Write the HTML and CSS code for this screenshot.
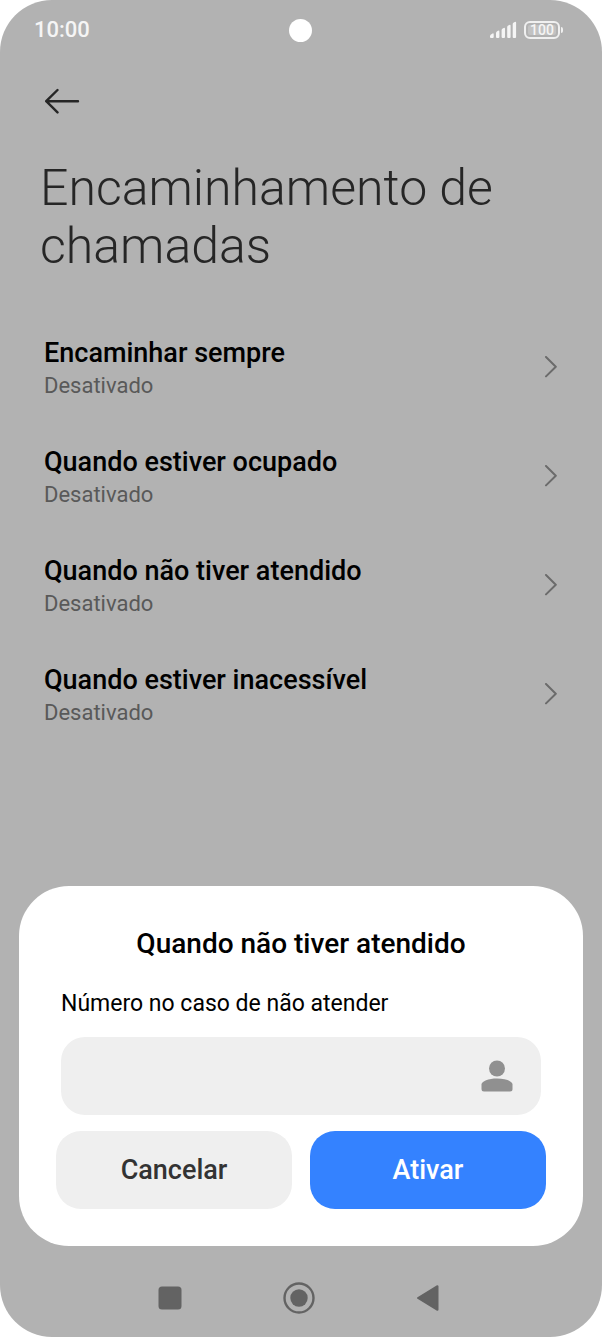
FILE: index.html
```html
<!DOCTYPE html>
<html lang="pt">
<head>
<meta charset="utf-8">
<meta name="viewport" content="width=device-width, initial-scale=1">
<title>Encaminhamento de chamadas</title>
<link rel="stylesheet" href="styles.css">
</head>
<body>
<div class="phone">
  <header class="status">
    <span class="clock">10:00</span>
    <span class="camera"></span>
    <span class="indicators">
      <svg class="signal" width="28" height="18" viewBox="0 0 28 18" fill="#f5f5f5">
        <path d="M1 15q0-1.500 2.500-2.500 1.200-.5 1.200.8V16q0 1-1 1H2q-1 0-1-1z"/>
        <path d="M7 12q0-1 1.500-2 1.900-1 1.900.5V16q0 1-1 1H8q-1 0-1-1z"/>
        <path d="M12.600 9q0-1 1.500-1.800 1.900-1 1.900.5V16q0 1-1 1h-1.400q-1 0-1-1z"/>
        <path d="M18.200 6q0-1 1.500-1.800 1.900-1 1.900.5V16q0 1-1 1h-1.400q-1 0-1-1z"/>
        <path d="M23.700 3q0-1 1.500-1.800 1.900-1 1.900.5V16q0 1-1 1h-1.400q-1 0-1-1z"/>
      </svg>
      <span class="battery"><span class="charge">100</span></span>
    </span>
  </header>

  <main class="page">
    <button class="back" type="button" aria-label="Voltar">
      <svg width="36" height="26" viewBox="0 0 36 26" fill="none" stroke="#262626" stroke-width="2.4" stroke-linecap="round" stroke-linejoin="round">
        <path d="M13.500 2 2.200 13.200 13.500 24.400M2.200 13.200H34"/>
      </svg>
    </button>
    <h1 class="title">Encaminhamento de chamadas</h1>
    <ul class="options">
      <li><a class="option" href="#"><span class="text"><span class="name">Encaminhar sempre</span><span class="state">Desativado</span></span>
        <svg class="chevron" viewBox="0 0 14 24"><path d="M2 1 11.800 10.700 2 20.400"/></svg></a></li>
      <li><a class="option" href="#"><span class="text"><span class="name">Quando estiver ocupado</span><span class="state">Desativado</span></span>
        <svg class="chevron" viewBox="0 0 14 24"><path d="M2 1 11.800 10.700 2 20.400"/></svg></a></li>
      <li><a class="option" href="#"><span class="text"><span class="name">Quando não tiver atendido</span><span class="state">Desativado</span></span>
        <svg class="chevron" viewBox="0 0 14 24"><path d="M2 1 11.800 10.700 2 20.400"/></svg></a></li>
      <li><a class="option" href="#"><span class="text"><span class="name">Quando estiver inacessível</span><span class="state">Desativado</span></span>
        <svg class="chevron" viewBox="0 0 14 24"><path d="M2 1 11.800 10.700 2 20.400"/></svg></a></li>
    </ul>
  </main>

  <form class="dialog" role="dialog" aria-labelledby="dialog-title">
    <h2 class="dialog-title" id="dialog-title">Quando não tiver atendido</h2>
    <label class="label" for="number">Número no caso de não atender</label>
    <div class="field">
      <input class="number" id="number" type="tel">
      <button class="contact" type="button" aria-label="Contactos">
        <svg width="32" height="32" viewBox="0 0 32 32" fill="#909090">
          <circle cx="16" cy="8.500" r="8"/>
          <path d="M.5 24.500c0-3.300 7-6 15.500-6s15.500 2.700 15.500 6V29q0 2.500-2.500 2.500H3Q.5 31.500.5 29z"/>
        </svg>
      </button>
    </div>
    <div class="actions">
      <button class="action" type="button">Cancelar</button>
      <button class="action primary" type="submit">Ativar</button>
    </div>
  </form>

  <nav class="nav">
    <button type="button" aria-label="Recentes">
      <svg width="32" height="32" viewBox="0 0 32 32" fill="#636363"><rect x="4.500" y="4.500" width="23" height="23" rx="3.500"/></svg>
    </button>
    <button type="button" aria-label="Início">
      <svg width="32" height="32" viewBox="0 0 32 32" fill="#636363"><circle cx="16" cy="16" r="14.500" fill="none" stroke="#636363" stroke-width="2.400"/><circle cx="16" cy="16" r="8.700"/></svg>
    </button>
    <button type="button" aria-label="Voltar">
      <svg width="32" height="32" viewBox="0 0 32 32" fill="#636363" stroke="#636363" stroke-width="2" stroke-linejoin="round"><path d="M25.500 4.200v23.600L6 16z"/></svg>
    </button>
  </nav>
</div>
</body>
</html>
```
FILE: styles.css
```css
* { box-sizing: border-box; }

body {
  margin: 0;
  background: #fff;
  font-family: Roboto, "Liberation Sans", sans-serif;
}

button {
  font: inherit;
  border: 0;
  padding: 0;
  background: none;
  cursor: pointer;
}

svg { display: block; }

.phone {
  display: flex;
  flex-direction: column;
  min-height: 100vh;
  border-radius: 52px;
  background: #b2b2b2;
}

.status {
  display: grid;
  grid-template-columns: 1fr auto 1fr;
  align-items: center;
  height: 60px;
  padding: 0 36px 0 34px;
  color: #f5f5f5;
}

.clock {
  font-size: 22px;
  font-weight: 500;
  line-height: 26px;
}

.camera {
  width: 23px;
  height: 23px;
  border-radius: 50%;
  background: #fff;
}

.indicators {
  display: flex;
  justify-content: flex-end;
  align-items: center;
  gap: 7px;
}

.battery {
  position: relative;
  width: 36px;
  height: 18px;
  margin-right: 6px;
  padding: 2px;
  border: 2px solid #f0f0f0;
  border-radius: 6px;
}

.battery::after {
  content: "";
  position: absolute;
  top: 4px;
  right: -5px;
  width: 2px;
  height: 6px;
  border-radius: 0 2px 2px 0;
  background: #f0f0f0;
}

.charge {
  display: block;
  border-radius: 2px;
  background: #c2c2c2;
  font-size: 14px;
  font-weight: 500;
  line-height: 10px;
  text-align: center;
}

.page { padding: 28px 44px 40px; }

.title {
  margin: 41px -4px 0;
  color: #262626;
  font-size: 50px;
  font-weight: 300;
  line-height: 58px;
}

.options {
  display: grid;
  gap: 47px;
  margin: 62px 0 0;
  padding: 0;
  list-style: none;
}

.option {
  display: flex;
  justify-content: space-between;
  align-items: center;
  color: #000;
  text-decoration: none;
}

.text {
  display: grid;
  gap: 4px;
}

.name {
  font-size: 27px;
  font-weight: 500;
  line-height: 32px;
}

.state {
  color: #595959;
  font-size: 22px;
  line-height: 26px;
}

.chevron {
  width: 14px;
  height: 24px;
  fill: none;
  stroke: #6b6b6b;
  stroke-width: 2;
  stroke-linecap: round;
  stroke-linejoin: round;
}

.dialog {
  margin: auto 19px 0;
  padding: 41px 37px 37px;
  border-radius: 50px;
  background: #fff;
}

.dialog-title {
  margin: 0;
  font-size: 28px;
  font-weight: 500;
  line-height: 34px;
  text-align: center;
}

.label {
  display: block;
  margin: 29px 5px 19px;
  font-size: 23px;
  line-height: 28px;
}

.field {
  display: flex;
  align-items: center;
  height: 78px;
  margin: 0 5px;
  padding: 0 28px 0 24px;
  border-radius: 24px;
  background: #efefef;
}

.number {
  flex: 1;
  min-width: 0;
  height: 100%;
  border: 0;
  outline: 0;
  background: none;
  font: inherit;
  font-size: 23px;
}

.actions {
  display: grid;
  grid-template-columns: 1fr 1fr;
  gap: 18px;
  margin-top: 16px;
}

.action {
  height: 78px;
  border-radius: 25px;
  background: #efefef;
  color: #333;
  font-size: 27px;
  font-weight: 500;
}

.primary {
  background: #3482ff;
  color: #fff;
}

.nav {
  display: flex;
  justify-content: center;
  align-items: center;
  gap: 97px;
  height: 91px;
  padding: 12px 5px 0 0;
}
```
